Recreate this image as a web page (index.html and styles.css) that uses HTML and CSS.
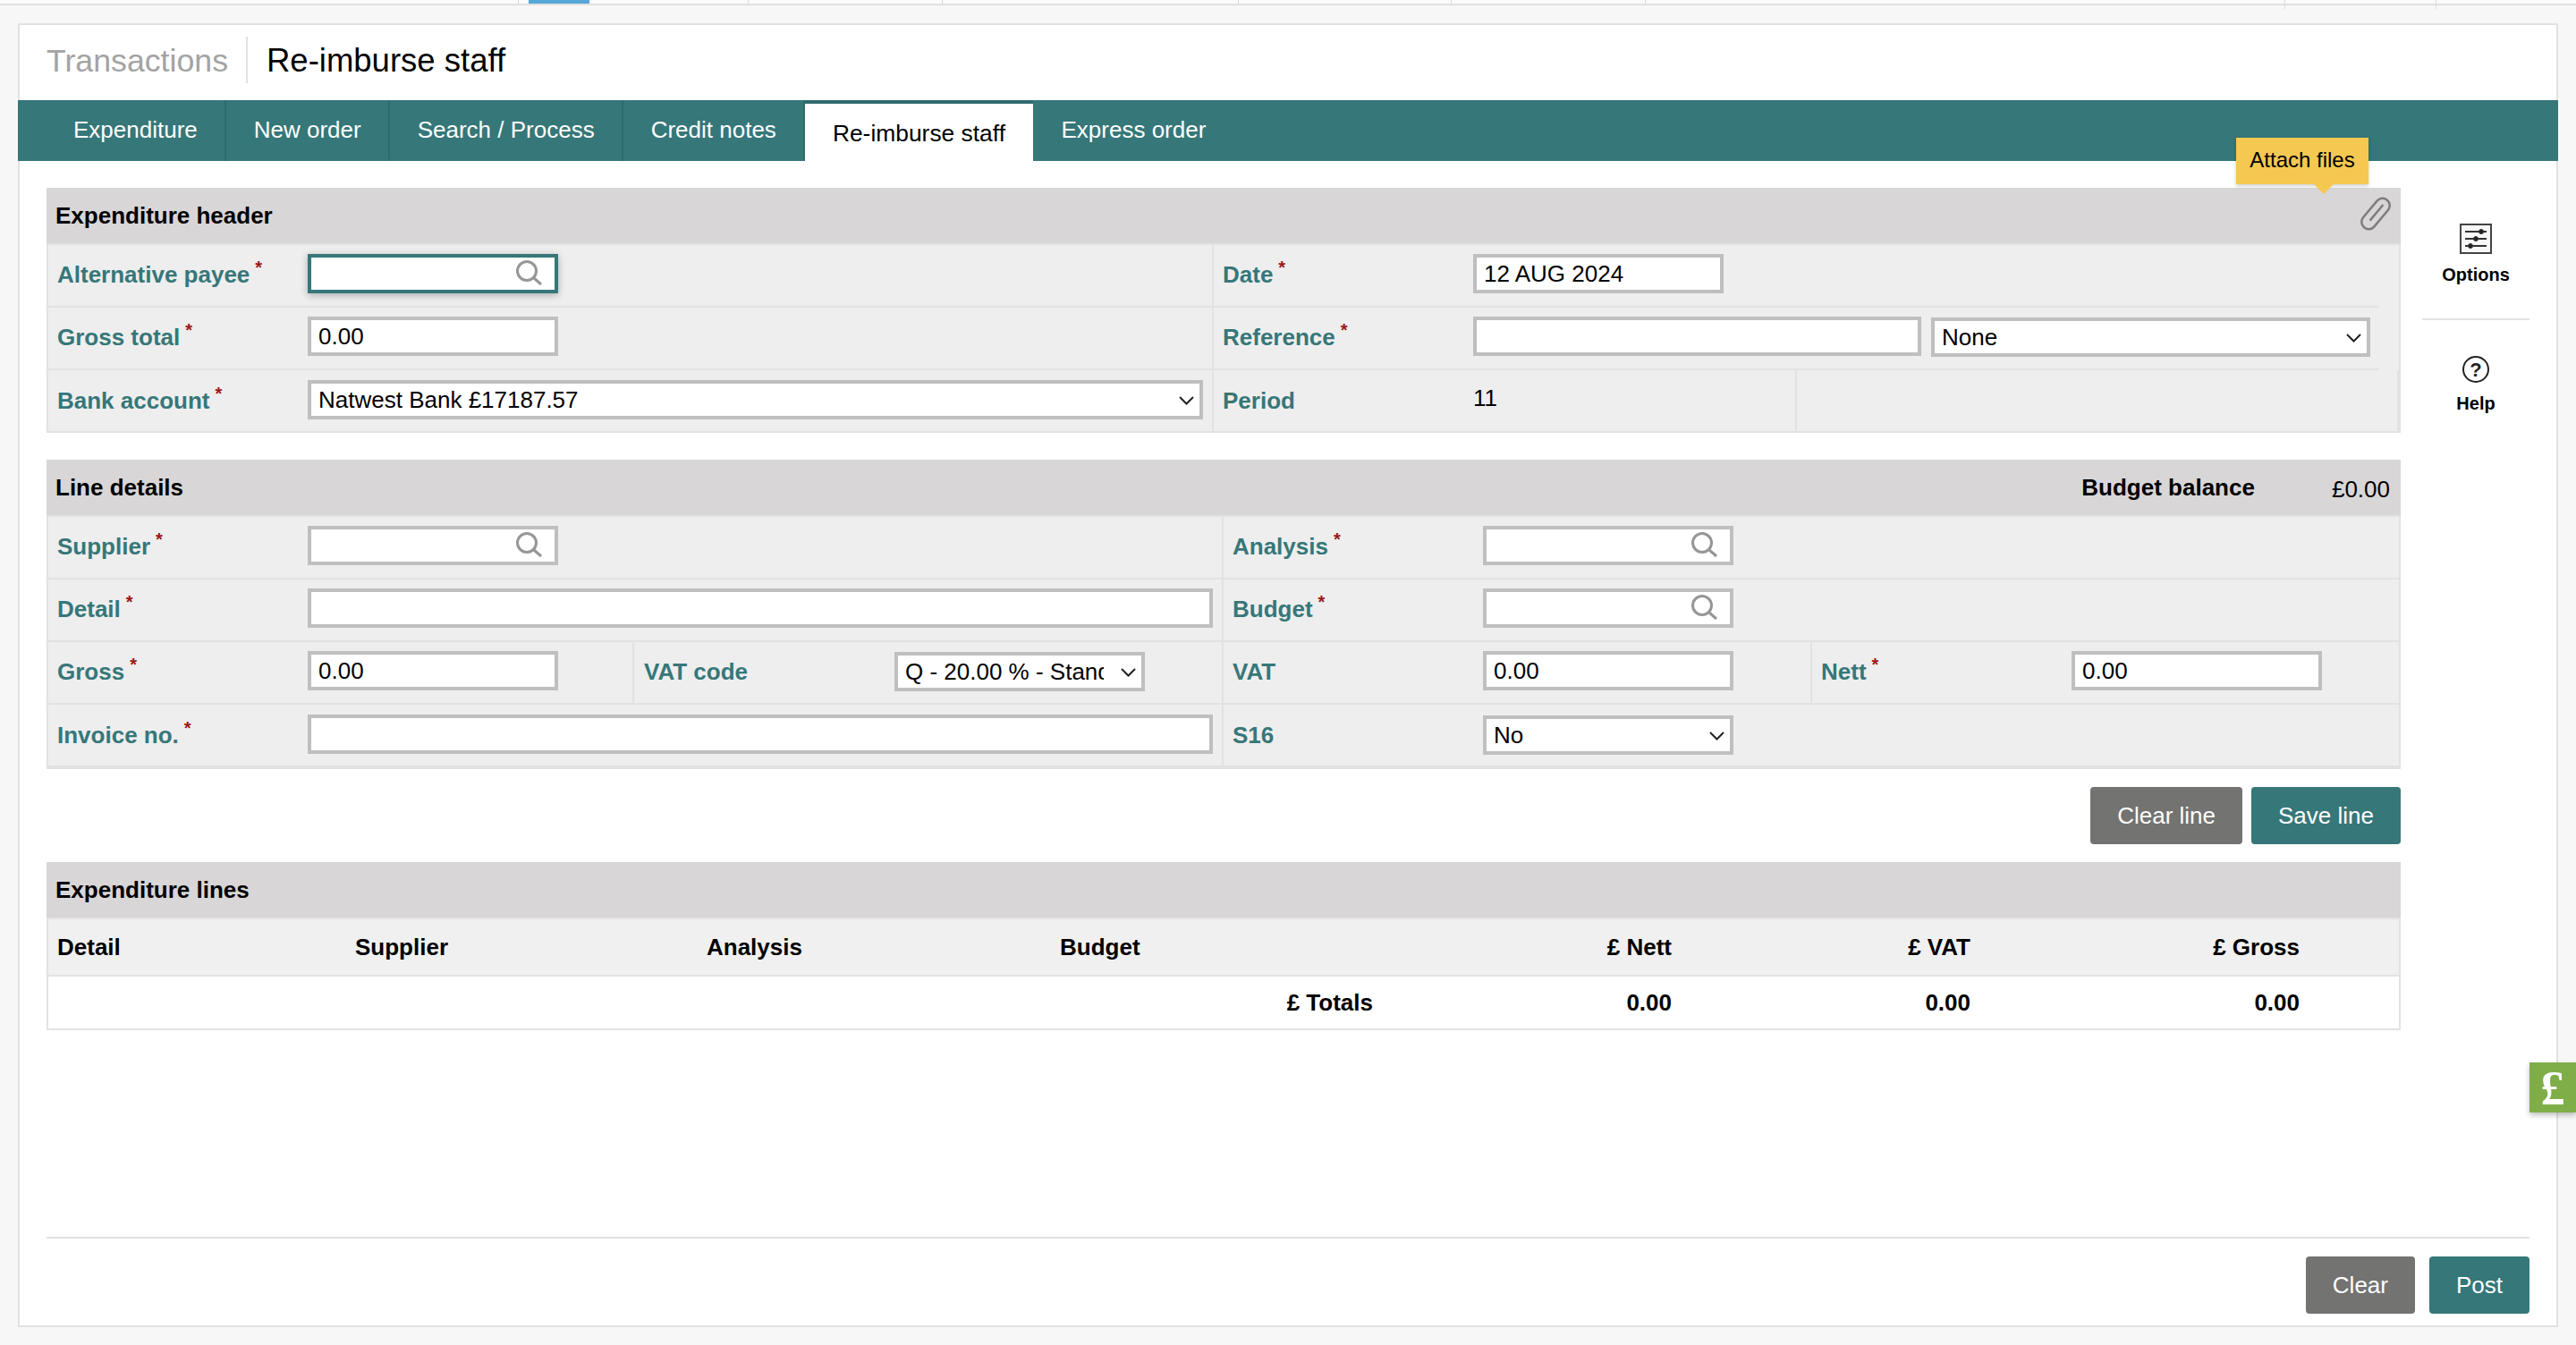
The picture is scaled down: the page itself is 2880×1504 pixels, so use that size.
FILE: index.html
```html
<!DOCTYPE html>
<html lang="en">
<head>
    <meta charset="UTF-8">
    <meta name="viewport" content="width=device-width, initial-scale=1.0">
    <title>Re-imburse staff</title>
    <link rel="stylesheet" href="styles.css">
</head>
<body>
    <div class="top-strip">
        <span class="strip-cell s1"></span>
        <span class="strip-active"></span>
        <span class="strip-cell s2"></span>
        <span class="strip-cell s3"></span>
        <span class="strip-cell s4"></span>
        <span class="strip-cell s5"></span>
        <span class="strip-cell s6"></span>
        <span class="strip-cell s7 tall"></span>
        <span class="strip-cell s8 tall"></span>
    </div>

    <div class="card">
        <header class="page-title">
            <span class="crumb">Transactions</span>
            <h1>Re-imburse staff</h1>
        </header>

        <nav class="tabs">
            <a class="tab first">Expenditure</a>
            <a class="tab">New order</a>
            <a class="tab">Search / Process</a>
            <a class="tab">Credit notes</a>
            <a class="tab active">Re-imburse staff</a>
            <a class="tab last">Express order</a>
        </nav>

        <div class="content">
            <main class="forms">
                <section class="panel">
                    <div class="panel-head">
                        <h2>Expenditure header</h2>
                        <div class="tooltip">Attach files</div>
                        <svg class="clip" width="38" height="40" viewBox="0 0 38 40" fill="none" stroke="#7d7d7d" stroke-width="2.500">
                            <g transform="rotate(40 19 20) translate(1 -3)">
                                <rect x="10" y="3" width="16" height="40" rx="8"/>
                                <path d="M18 10V33"/>
                            </g>
                        </svg>
                    </div>
                    <div class="panel-body">
                        <div class="row">
                            <div class="cell c-head-left ruled">
                                <label class="field-label">Alternative payee<sup>*</sup></label>
                                <div class="lookup focused">
                                    <input class="input" type="text">
                                    <svg class="search" width="30" height="30" viewBox="0 0 30 30" fill="none" stroke="#969696" stroke-width="3"><circle cx="13" cy="13" r="10.500"/><path d="M21 21l8 7"/></svg>
                                </div>
                            </div>
                            <div class="cell c-head-right ruled">
                                <label class="field-label">Date<sup>*</sup></label>
                                <input class="input w-280" type="text" value="12 AUG 2024">
                            </div>
                        </div>
                        <div class="row">
                            <div class="cell c-head-left ruled">
                                <label class="field-label">Gross total<sup>*</sup></label>
                                <input class="input w-280" type="text" value="0.00">
                            </div>
                            <div class="cell c-head-right ruled">
                                <label class="field-label">Reference<sup>*</sup></label>
                                <input class="input w-501" type="text">
                                <div class="select w-491 gap-left low">
                                    <select><option>None</option></select>
                                    <svg class="chevron" width="17" height="10" viewBox="0 0 17 10" fill="none" stroke="#222" stroke-width="2"><path d="M1 1l7.500 7.500L16 1"/></svg>
                                </div>
                            </div>
                        </div>
                        <div class="row last">
                            <div class="cell c-head-left">
                                <label class="field-label">Bank account<sup>*</sup></label>
                                <div class="select w-1001">
                                    <select><option>Natwest Bank £17187.57</option></select>
                                    <svg class="chevron" width="17" height="10" viewBox="0 0 17 10" fill="none" stroke="#222" stroke-width="2"><path d="M1 1l7.500 7.500L16 1"/></svg>
                                </div>
                            </div>
                            <div class="cell c-period">
                                <label class="field-label">Period</label>
                                <span class="value">11</span>
                            </div>
                            <div class="cell c-rest"></div>
                        </div>
                    </div>
                </section>

                <section class="panel">
                    <div class="panel-head">
                        <h2>Line details</h2>
                        <div class="balance">
                            <strong>Budget balance</strong>
                            <span>£0.00</span>
                        </div>
                    </div>
                    <div class="panel-body thick">
                        <div class="row">
                            <div class="cell c-line-left ruled">
                                <label class="field-label">Supplier<sup>*</sup></label>
                                <div class="lookup">
                                    <input class="input" type="text">
                                    <svg class="search" width="30" height="30" viewBox="0 0 30 30" fill="none" stroke="#969696" stroke-width="3"><circle cx="13" cy="13" r="10.500"/><path d="M21 21l8 7"/></svg>
                                </div>
                            </div>
                            <div class="cell c-line-right ruled">
                                <label class="field-label">Analysis<sup>*</sup></label>
                                <div class="lookup">
                                    <input class="input" type="text">
                                    <svg class="search" width="30" height="30" viewBox="0 0 30 30" fill="none" stroke="#969696" stroke-width="3"><circle cx="13" cy="13" r="10.500"/><path d="M21 21l8 7"/></svg>
                                </div>
                            </div>
                        </div>
                        <div class="row">
                            <div class="cell c-line-left ruled">
                                <label class="field-label">Detail<sup>*</sup></label>
                                <input class="input w-1012" type="text">
                            </div>
                            <div class="cell c-line-right ruled">
                                <label class="field-label">Budget<sup>*</sup></label>
                                <div class="lookup">
                                    <input class="input" type="text">
                                    <svg class="search" width="30" height="30" viewBox="0 0 30 30" fill="none" stroke="#969696" stroke-width="3"><circle cx="13" cy="13" r="10.500"/><path d="M21 21l8 7"/></svg>
                                </div>
                            </div>
                        </div>
                        <div class="row">
                            <div class="cell c-quarter-a ruled">
                                <label class="field-label">Gross<sup>*</sup></label>
                                <input class="input w-280" type="text" value="0.00">
                            </div>
                            <div class="cell c-quarter-b ruled">
                                <label class="field-label">VAT code</label>
                                <div class="select w-280 low">
                                    <select class="clipped"><option>Q - 20.00 % - Standard</option></select>
                                    <svg class="chevron" width="17" height="10" viewBox="0 0 17 10" fill="none" stroke="#222" stroke-width="2"><path d="M1 1l7.500 7.500L16 1"/></svg>
                                </div>
                            </div>
                            <div class="cell c-quarter-c ruled">
                                <label class="field-label">VAT</label>
                                <input class="input w-280" type="text" value="0.00">
                            </div>
                            <div class="cell c-quarter-d ruled">
                                <label class="field-label">Nett<sup>*</sup></label>
                                <input class="input w-280" type="text" value="0.00">
                            </div>
                        </div>
                        <div class="row last">
                            <div class="cell c-line-left">
                                <label class="field-label">Invoice no.<sup>*</sup></label>
                                <input class="input w-1012" type="text">
                            </div>
                            <div class="cell c-line-right">
                                <label class="field-label">S16</label>
                                <div class="select w-280 low">
                                    <select><option>No</option></select>
                                    <svg class="chevron" width="17" height="10" viewBox="0 0 17 10" fill="none" stroke="#222" stroke-width="2"><path d="M1 1l7.500 7.500L16 1"/></svg>
                                </div>
                            </div>
                        </div>
                    </div>
                </section>

                <div class="line-actions">
                    <button class="btn grey">Clear line</button>
                    <button class="btn teal">Save line</button>
                </div>

                <section class="panel lines">
                    <div class="panel-head"><h2>Expenditure lines</h2></div>
                    <table class="lines-table">
                        <colgroup>
                            <col class="col-detail"><col class="col-supplier"><col class="col-analysis"><col class="col-budget">
                            <col class="col-nett"><col class="col-vat"><col class="col-gross"><col class="col-end">
                        </colgroup>
                        <thead>
                            <tr>
                                <th>Detail</th><th>Supplier</th><th>Analysis</th><th>Budget</th>
                                <th class="num">£ Nett</th><th class="num">£ VAT</th><th class="num">£ Gross</th><th></th>
                            </tr>
                        </thead>
                        <tbody>
                            <tr>
                                <td colspan="4" class="num">£ Totals</td>
                                <td class="num">0.00</td><td class="num">0.00</td><td class="num">0.00</td><td></td>
                            </tr>
                        </tbody>
                    </table>
                </section>
            </main>

            <aside class="side">
                <a class="side-item options">
                    <svg width="36" height="34" viewBox="0 0 36 34" fill="none" stroke="#333">
                        <rect x="1" y="1" width="34" height="32" stroke="#444" stroke-width="2" fill="#f8f8f8"/>
                        <path d="M6 9H30M6 17H30M6 25H30" stroke-width="2"/>
                        <circle cx="24" cy="9" r="2.500" fill="#222"/>
                        <circle cx="18" cy="17" r="2.500" fill="#222"/>
                        <circle cx="12" cy="25" r="2.500" fill="#222"/>
                    </svg>
                    <span>Options</span>
                </a>
                <a class="side-item help">
                    <svg width="30" height="30" viewBox="0 0 30 30" fill="none">
                        <circle cx="15" cy="15" r="14" stroke="#222" stroke-width="2"/>
                        <text x="15" y="23" text-anchor="middle" class="help-mark">?</text>
                    </svg>
                    <span>Help</span>
                </a>
            </aside>
        </div>

        <footer class="page-actions">
            <button class="btn grey">Clear</button>
            <button class="btn teal">Post</button>
        </footer>
    </div>

    <div class="pound-tab">£</div>
</body>
</html>
```

FILE: styles.css
```css
* {
    box-sizing: border-box;
}

html, body {
    height: 100%;
    overflow: hidden;
}

body {
    margin: 0;
    background: #f7f7f7;
    color: #000;
    font-family: "Liberation Sans", Arial, sans-serif;
    font-size: 26px;
}

/* strip of the page above, cut off by the window */
.top-strip {
    display: flex;
    height: 6px;
    border-bottom: 2px solid #e0e0e0;
    background: #fbfbfb;
}

.strip-cell {
    position: relative;
    border-right: 1px solid #d8d8d8;
}

.strip-cell.tall::after {
    content: "";
    position: absolute;
    top: 4px;
    right: -1px;
    height: 6px;
    border-right: 1px solid #dcdcdc;
}

.s1 { width: 580px; }
.s2 { width: 178px; }
.s3 { width: 217px; }
.s4 { width: 331px; }
.s5 { width: 238px; }
.s6 { width: 217px; }
.s7 { width: 715px; }
.s8 { width: 169px; }

.strip-active {
    width: 68px;
    margin-left: 11px;
    background: #55a7d6;
}

.card {
    display: flex;
    flex-direction: column;
    width: 2840px;
    height: 1458px;
    margin: 20px 0 0 20px;
    background: #fff;
    border: 2px solid #e2e2e2;
}

.page-title {
    display: flex;
    align-items: center;
    height: 84px;
    padding: 0 0 7px 30px;
}

.crumb {
    display: block;
    padding: 6px 20px 4px 0;
    border-right: 2px solid #e2e2e2;
    font-size: 35.700px;
    line-height: 42px;
    color: #a3a3a3;
}

.page-title h1 {
    margin: 2px 0 0 21px;
    font-size: 36.500px;
    font-weight: normal;
}

.tabs {
    display: flex;
    height: 68px;
    margin: 0 -2px;
    padding-left: 32px;
    background: #367779;
}

.tab {
    padding: 0 30.500px;
    border-right: 2px solid #2f6b6d;
    color: #fff;
    line-height: 66px;
}

.tab.first {
    padding-left: 30px;
}

.tab.active {
    margin-top: 4px;
    border-right: 0;
    background: #fff;
    color: #000;
    font-size: 26.400px;
    box-shadow: 0 -4px 0 #2f6b6d;
}

.tab.last {
    border-right: 0;
    padding-left: 32px;
}

.content {
    display: flex;
    padding: 30px 0 0 30px;
}

.forms {
    width: 2632px;
}

.panel {
    margin-bottom: 30px;
}

.panel-head {
    position: relative;
    display: flex;
    align-items: center;
    justify-content: space-between;
    height: 64px;
    padding: 0 12px 0 10px;
    border-bottom: 2px solid #e2e2e2;
    background: #d8d6d7;
}

.panel-head h2 {
    margin: 0;
    font-size: 26px;
}

.tooltip {
    position: absolute;
    top: -56px;
    right: 36px;
    width: 148px;
    height: 52px;
    background: #f5c851;
    box-shadow: 0 2px 4px rgba(0, 0, 0, 0.2);
    font-size: 24px;
    line-height: 50px;
    text-align: center;
    z-index: 5;
}

.tooltip::after {
    content: "";
    position: absolute;
    top: 52px;
    left: 87px;
    border: 11px solid transparent;
    border-bottom: 0;
    border-top-color: #f5c851;
}

.clip {
    position: absolute;
    top: 9px;
    right: 9px;
}

.balance {
    display: flex;
    align-items: center;
    margin-left: auto;
}

.balance strong {
    margin-right: 86px;
}

.balance span {
    padding-top: 4px;
}

.panel-body {
    border: 2px solid #e2e2e2;
    border-top: 0;
    background: #eee;
}

.panel-body.thick {
    border-bottom-width: 4px;
}

.row {
    display: flex;
    height: 70px;
}

.row.last {
    height: 68px;
}

.cell {
    display: flex;
    align-items: center;
    padding-left: 10px;
    padding-bottom: 4px;
    flex: none;
}

.cell.ruled {
    border-bottom: 2px solid #e2e2e2;
}

.row.last .cell {
    padding-bottom: 2px;
}

.c-head-left { width: 1303px; border-right: 2px solid #e2e2e2; }
.c-head-right { width: 1303px; }
.c-period { width: 652px; border-right: 2px solid #e2e2e2; }
.c-rest { flex: 1; border-right: 2px solid #e2e2e2; }

.c-line-left { width: 1312px; }
.c-line-right { flex: 1; padding-left: 10px; border-left: 2px solid #e2e2e2; }
.c-quarter-a { width: 655px; border-right: 2px solid #e2e2e2; }
.c-quarter-b { width: 657px; padding-left: 11px; }
.c-quarter-c { width: 658px; padding-left: 10px; border-left: 2px solid #e2e2e2; }
.c-quarter-d { flex: 1; border-left: 2px solid #e2e2e2; }

.field-label {
    flex: none;
    width: 280px;
    padding-top: 2px;
    color: #367779;
    font-weight: bold;
}

.field-label sup {
    margin-left: 6px;
    color: #9b1515;
    font-size: 20px;
    line-height: 0;
    vertical-align: 10px;
}

.input,
.select select {
    height: 44px;
    border: 4px solid #bfbfbf;
    border-radius: 0;
    background: #fff;
    color: #000;
    font-family: inherit;
    font-size: 26px;
    padding: 0 8px;
    outline: none;
}

.input { display: block; }

.w-280 { width: 280px; }
.w-501 { width: 501px; }
.w-491 { width: 491px; }
.w-1001 { width: 1001px; }
.w-1012 { width: 1012px; }
.gap-left { margin-left: 11px; }

.lookup,
.select {
    position: relative;
    flex: none;
}

.lookup {
    width: 280px;
}

.lookup .input {
    width: 100%;
}

.lookup.focused .input {
    border-color: #367779;
    box-shadow: 0 2px 8px rgba(0, 0, 0, 0.28);
}

.search {
    position: absolute;
    top: 6px;
    right: 18px;
}

.select select {
    display: block;
    width: 100%;
    appearance: none;
    padding-right: 28px;
}

.select select.clipped {
    padding-right: 42px;
}

.select.low {
    margin-top: 2px;
}

.chevron {
    position: absolute;
    top: 18px;
    right: 10px;
    pointer-events: none;
}

.value {
    padding-bottom: 4px;
}

.line-actions {
    display: flex;
    justify-content: flex-end;
    gap: 10px;
    margin: -10px 0 20px;
}

.btn {
    height: 64px;
    padding: 0 30px;
    border: 0;
    border-radius: 4px;
    color: #fff;
    font-family: inherit;
    font-size: 26px;
}

.btn.grey { background: #737371; }
.btn.teal { background: #367779; }

.lines {
    margin-bottom: 0;
}

.lines-table {
    width: 100%;
    table-layout: fixed;
    border-collapse: collapse;
    border: 2px solid #e2e2e2;
    border-top: 0;
    font-weight: bold;
}

.col-detail { width: 334px; }
.col-supplier { width: 393px; }
.col-analysis { width: 395px; }
.col-budget { width: 370px; }
.col-nett { width: 334px; }
.col-vat { width: 334px; }
.col-gross { width: 368px; }

.lines-table th {
    height: 63px;
    padding: 0 10px;
    border-bottom: 2px solid #e2e2e2;
    background: #f0f0f0;
    text-align: left;
}

.lines-table td {
    height: 60px;
    padding: 0 10px;
}

.lines-table .num {
    text-align: right;
}

.side {
    flex: 1;
    padding: 40px 0 0 24px;
}

.side-item {
    display: flex;
    flex-direction: column;
    align-items: center;
    width: 120px;
    font-size: 20px;
    font-weight: bold;
}

.side-item span {
    margin-top: 12px;
}

.options {
    height: 108px;
    border-bottom: 2px solid #e2e2e2;
}

.help {
    padding-top: 40px;
}

.help-mark {
    font-family: "Liberation Sans", Arial, sans-serif;
    font-size: 22px;
    font-weight: bold;
    fill: #222;
}

.page-actions {
    display: flex;
    justify-content: flex-end;
    gap: 16px;
    margin: auto 30px 0;
    padding: 20px 0 13px;
    border-top: 2px solid #e2e2e2;
}

.pound-tab {
    position: fixed;
    top: 1188px;
    right: 0;
    width: 52px;
    height: 56px;
    background: #7fae48;
    box-shadow: 0 3px 6px rgba(0, 0, 0, 0.25);
    color: #fff;
    font-family: "Liberation Serif", serif;
    font-size: 54px;
    font-weight: bold;
    line-height: 58px;
    text-align: center;
}
```
